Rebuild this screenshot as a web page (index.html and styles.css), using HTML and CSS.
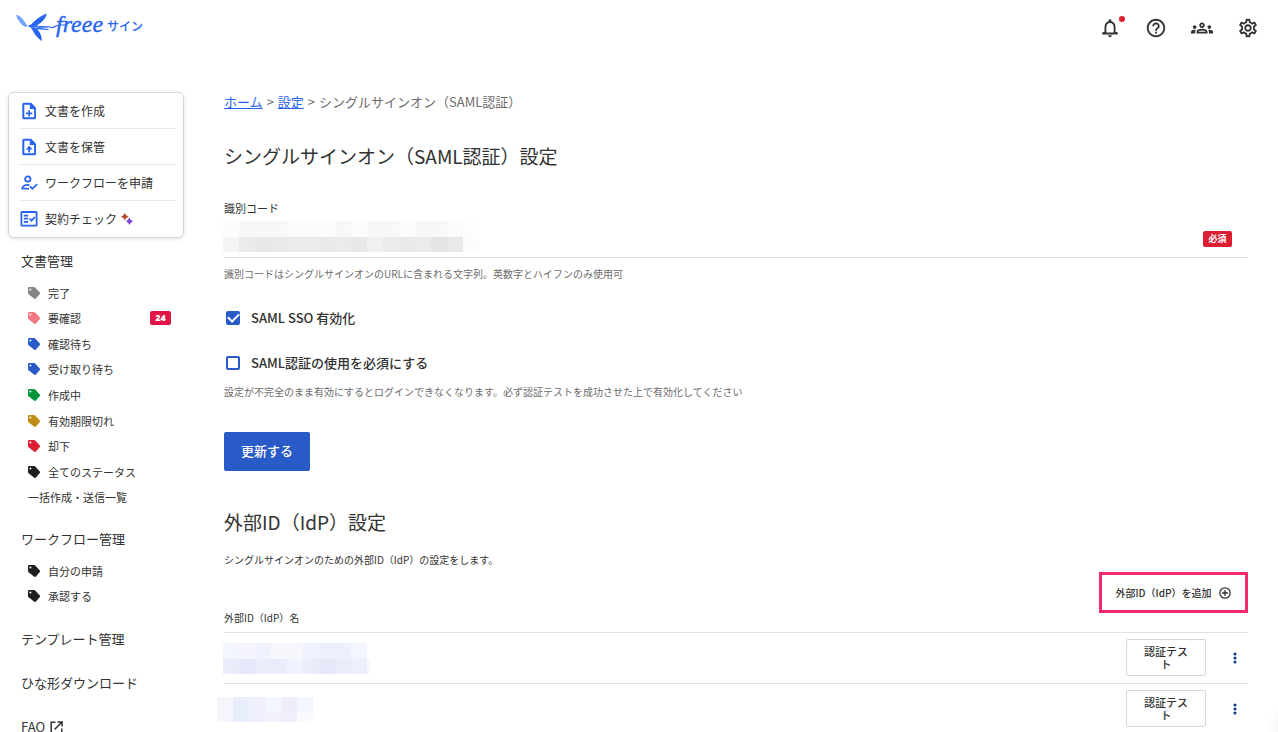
FILE: index.html
```html
<!DOCTYPE html>
<html lang="ja">
<head>
<meta charset="utf-8">
<title>シングルサインオン（SAML認証）設定</title>
<link rel="stylesheet" href="styles.css">
</head>
<body>
<svg class="defs" aria-hidden="true">
  <symbol id="tag" viewBox="0 0 12 12"><path fill-rule="evenodd" d="M0 1.200Q0 0 1.200 0H6Q6.700 0 7.200.5L11.800 5.400Q12.400 6.200 11.800 7L7.900 11.600Q7.100 12.300 6.300 11.700L.6 7.200Q0 6.700 0 6ZM2.400 1.400A1 1 0 1 0 2.400 3.400A1 1 0 0 0 2.400 1.400Z"/></symbol>
  <symbol id="kebab" viewBox="0 0 4 12"><circle cx="2" cy="2" r="1.600"/><circle cx="2" cy="6" r="1.600"/><circle cx="2" cy="10" r="1.600"/></symbol>
</svg>

<header class="header">
  <a class="logo" href="#" aria-label="freee サイン">
    <svg width="136" height="40" viewBox="8 8 136 40">
      <path class="logo-light" d="M16.300 15.200C18.200 14.500 21 17 23.200 19.800C25 22.200 26.300 24.200 27.300 25.300L26.200 27.200C24.500 26.800 22.500 25.500 20.500 23C18.500 20.500 16.600 17.800 16.300 15.200Z"/>
      <path class="logo-blue" d="M46.800 13.500C40 16 34.500 20.500 31.300 24.400C29.800 24.600 28.800 25.300 27.500 26C29.500 26.600 31 27.400 31.700 28.700C33.500 33 37.500 38 41.800 41.200C42 36.500 40.200 32 37.300 29.200L48.500 29.900V29L38.500 27.800L50.800 27.400L51 26.600L36.500 25.700C41.500 22.800 45.800 19 46.800 13.500Z"/>
      <path class="logo-light" d="M31.500 27L41 26.600L36 28.400Z"/>
      <path class="logo-line" d="M50.500 27.600C53.500 28.200 56 25.400 59 25H66"/>
      <text class="logo-name" x="56" y="32">freee</text>
      <text class="logo-product" x="107" y="31">サイン</text>
    </svg>
  </a>
  <nav class="header-tools" aria-label="ユーザーメニュー">
    <button class="icon-button" type="button" aria-label="通知">
      <svg width="22" height="22" viewBox="0 0 24 24"><path d="M12 22c1.100 0 2-.9 2-2h-4c0 1.100.9 2 2 2zm6-6v-5c0-3.070-1.630-5.640-4.500-6.320V4c0-.83-.67-1.500-1.500-1.500s-1.500.67-1.500 1.500v.68C7.640 5.360 6 7.920 6 11v5l-2.500 1v2h17v-2zm-2 1H8v-6c0-2.480 1.510-4.500 4-4.500s4 2.020 4 4.500z"/></svg>
      <span class="dot"></span>
    </button>
    <button class="icon-button" type="button" aria-label="ヘルプ">
      <svg width="22" height="22" viewBox="0 0 24 24"><path d="M11 18h2v-2h-2v2zm1-16C6.480 2 2 6.480 2 12s4.480 10 10 10 10-4.480 10-10S17.520 2 12 2zm0 18c-4.410 0-8-3.590-8-8s3.590-8 8-8 8 3.590 8 8-3.590 8-8 8zm0-14c-2.210 0-4 1.790-4 4h2c0-1.100.9-2 2-2s2 .9 2 2c0 2-3 1.750-3 5h2c0-2.250 3-2.500 3-5 0-2.210-1.790-4-4-4z"/></svg>
    </button>
    <button class="icon-button" type="button" aria-label="メンバー">
      <svg width="22" height="22" viewBox="0 0 24 24"><path d="M4 13c1.100 0 2-.9 2-2s-.9-2-2-2-2 .9-2 2 .9 2 2 2zm1.130 1.100C4.760 14.040 4.390 14 4 14c-.99 0-1.930.21-2.780.58C.48 14.900 0 15.620 0 16.430V18h4.500v-1.610c0-.83.23-1.610.63-2.290zM20 13c1.100 0 2-.9 2-2s-.9-2-2-2-2 .9-2 2 .9 2 2 2zm4 3.430c0-.81-.48-1.530-1.220-1.850C21.930 14.210 20.990 14 20 14c-.39 0-.76.04-1.130.1.400.68.630 1.460.630 2.290V18H24v-1.570zM16.240 13.650C15.070 13.130 13.630 12.750 12 12.750s-3.070.39-4.240.9C6.680 14.130 6 15.210 6 16.390V18h12v-1.610c0-1.180-.68-2.260-1.760-2.740zM8.070 16c.09-.23.13-.39.91-.69.97-.38 1.990-.56 3.020-.56s2.050.18 3.020.56c.77.300.81.460.91.690H8.070zM12 8c.55 0 1 .45 1 1s-.45 1-1 1-1-.45-1-1 .45-1 1-1m0-2c-1.660 0-3 1.340-3 3s1.340 3 3 3 3-1.340 3-3-1.340-3-3-3z"/></svg>
    </button>
    <button class="icon-button" type="button" aria-label="設定">
      <svg width="22" height="22" viewBox="0 0 24 24"><path d="M19.430 12.980c.04-.32.07-.64.07-.98 0-.34-.03-.66-.07-.98l2.110-1.650c.19-.15.240-.42.120-.64l-2-3.460c-.09-.16-.26-.25-.44-.25-.06 0-.12.01-.17.03l-2.490 1c-.52-.4-1.080-.73-1.690-.98l-.38-2.650C14.460 2.180 14.250 2 14 2h-4c-.25 0-.46.18-.49.42l-.38 2.650c-.61.25-1.170.59-1.690.98l-2.490-1c-.06-.02-.12-.03-.18-.03-.17 0-.34.09-.43.25l-2 3.460c-.13.22-.07.49.12.64l2.110 1.650c-.04.32-.07.65-.07.98 0 .33.03.66.07.98l-2.110 1.650c-.19.15-.24.42-.12.64l2 3.460c.09.16.26.25.44.25.06 0 .12-.01.17-.03l2.490-1c.52.4 1.080.73 1.690.98l.38 2.650c.03.24.24.42.49.42h4c.25 0 .46-.18.49-.42l.38-2.650c.61-.25 1.170-.59 1.690-.98l2.490 1c.06.02.12.03.18.03.17 0 .34-.09.43-.25l2-3.460c.12-.22.07-.49-.12-.64l-2.110-1.650zm-1.980-1.710c.04.31.05.52.05.73 0 .21-.02.43-.05.73l-.14 1.130.89.7 1.080.84-.7 1.210-1.270-.51-1.040-.42-.9.680c-.43.32-.84.56-1.250.73l-1.060.43-.16 1.130-.2 1.350h-1.400l-.19-1.350-.16-1.130-1.060-.43c-.43-.18-.83-.41-1.230-.71l-.91-.7-1.060.43-1.270.51-.7-1.210 1.080-.84.89-.7-.14-1.130c-.03-.31-.05-.54-.05-.74s.02-.43.05-.73l.14-1.130-.89-.7-1.080-.84.7-1.210 1.270.51 1.040.42.9-.68c.43-.32.84-.56 1.250-.73l1.060-.43.16-1.130.2-1.350h1.390l.19 1.350.16 1.130 1.060.43c.43.18.83.41 1.230.71l.91.7 1.060-.43 1.270-.51.7 1.210-1.070.85-.89.7.14 1.130zM12 8c-2.210 0-4 1.790-4 4s1.790 4 4 4 4-1.790 4-4-1.790-4-4-4zm0 6c-1.100 0-2-.9-2-2s.9-2 2-2 2 .9 2 2-.9 2-2 2z"/></svg>
    </button>
  </nav>
</header>

<div class="layout">
  <nav class="sidebar" aria-label="メインメニュー">
    <ul class="actions">
      <li><a href="#"><svg width="18" height="18" viewBox="0 0 18 18"><path fill-rule="evenodd" d="M3.800.8h7.400l4.800 5v10a1.500 1.500 0 0 1-1.500 1.500H3.800a1.500 1.500 0 0 1-1.500-1.500V2.300A1.500 1.500 0 0 1 3.800.8zM4.300 2.700v12.600h9.800V7H9.800V2.700z"/><path d="M8.300 8.200H10v2.300h2.300v1.700H10v2.300H8.300v-2.300H6v-1.700h2.300z"/></svg>文書を作成</a></li>
      <li><a href="#"><svg width="18" height="18" viewBox="0 0 18 18"><path fill-rule="evenodd" d="M3.800.8h7.400l4.800 5v10a1.500 1.500 0 0 1-1.500 1.500H3.800a1.500 1.500 0 0 1-1.500-1.500V2.300A1.500 1.500 0 0 1 3.800.8zM4.300 2.700v12.600h9.800V7H9.800V2.700z"/><path d="M9.200 7.800l3.500 3.700h-2.500v3H8.200v-3H5.700z"/></svg>文書を保管</a></li>
      <li><a href="#"><svg width="18" height="18" viewBox="0 0 18 18"><g class="stroke"><circle cx="7.800" cy="5" r="2.700"/><path d="M9.500 11.200C6 10.200 2.100 11.700 2.100 14.700H9M10 12.400l2.400 2.400 4.700-4.600"/></g></svg>ワークフローを申請</a></li>
      <li><a href="#"><svg width="18" height="18" viewBox="0 0 18 18"><g class="stroke"><rect x="1.400" y="2" width="15.200" height="13.600" rx=".6"/><path d="M3.800 5.600h4.400M3.800 8.700h4.400M3.800 11.800h4.400M9.600 8.700l1.900 1.900 3.400-3.600"/></g></svg>契約チェック<svg class="sparkle" width="12" height="12" viewBox="0 0 12 12"><path fill="#b9472a" d="M3.800 0Q4.600 3 7.600 3.800Q4.600 4.600 3.800 7.600Q3 4.600 0 3.800Q3 3 3.800 0Z"/><path fill="#7540d5" d="M8.400 4.600Q9.200 7.400 12 8.300Q9.200 9.200 8.400 12Q7.600 9.200 4.800 8.300Q7.600 7.400 8.400 4.600Z"/></svg></a></li>
    </ul>

    <h2 class="group-title">文書管理</h2>
    <ul class="statuses statuses-documents">
      <li><a href="#"><svg class="tag tag-gray"><use href="#tag"/></svg>完了</a></li>
      <li><a href="#"><svg class="tag tag-pink"><use href="#tag"/></svg>要確認<span class="count">24</span></a></li>
      <li><a href="#"><svg class="tag tag-blue"><use href="#tag"/></svg>確認待ち</a></li>
      <li><a href="#"><svg class="tag tag-blue"><use href="#tag"/></svg>受け取り待ち</a></li>
      <li><a href="#"><svg class="tag tag-green"><use href="#tag"/></svg>作成中</a></li>
      <li><a href="#"><svg class="tag tag-gold"><use href="#tag"/></svg>有効期限切れ</a></li>
      <li><a href="#"><svg class="tag tag-red"><use href="#tag"/></svg>却下</a></li>
      <li><a href="#"><svg class="tag"><use href="#tag"/></svg>全てのステータス</a></li>
      <li><a href="#">一括作成・送信一覧</a></li>
    </ul>

    <h2 class="group-title">ワークフロー管理</h2>
    <ul class="statuses statuses-workflow">
      <li><a href="#"><svg class="tag"><use href="#tag"/></svg>自分の申請</a></li>
      <li><a href="#"><svg class="tag"><use href="#tag"/></svg>承認する</a></li>
    </ul>

    <ul class="links">
      <li><a href="#">テンプレート管理</a></li>
      <li><a href="#">ひな形ダウンロード</a></li>
      <li><a href="#">FAQ<svg width="13" height="13" viewBox="0 0 13 13"><path d="M5.500 1.200H1.200v10.600h10.600V7.500M7.500.9h4.600v4.600M12 1L4.500 8.500"/></svg></a></li>
    </ul>
  </nav>

  <main class="main">
    <nav class="breadcrumb" aria-label="パンくず"><a href="#">ホーム</a><span>&gt;</span><a href="#">設定</a><span>&gt;</span>シングルサインオン（SAML認証）</nav>
    <h1 class="title">シングルサインオン（SAML認証）設定</h1>

    <form>
      <label class="field-label" for="code">識別コード</label>
      <div class="field">
        <input id="code" type="text">
        <svg class="mosaic mosaic-code" width="256" height="31" shape-rendering="crispEdges" aria-hidden="true">
          <path fill="#fcfcfc" d="M0 0h16v16H0zM64 0h48v16H64zM128 0h16v16h-16zM176 0h16v16h-16zM224 0h16v16h-16zM240 16h16v15h-16z"/>
          <path fill="#f8f8f8" d="M16 0h48v16H16zM112 0h16v16h-16zM144 0h32v16h-32zM192 0h32v16h-32z"/>
          <path fill="#fdfdfd" d="M240 0h16v16h-16z"/>
          <path fill="#f4f4f4" d="M0 16h16v15H0z"/>
          <path fill="#ebebeb" d="M16 16h208v15H16z"/>
          <path fill="#e8e8e6" d="M32 16h16v15H32zM128 16h16v15h-16z"/>
          <path fill="#e7eae8" d="M48 16h16v15H48zM176 16h16v15h-16z"/>
          <path fill="#f0f0f0" d="M144 16h16v15h-16z"/>
          <path fill="#e5e5e5" d="M208 16h16v15h-16z"/>
          <path fill="#e9e9e9" d="M224 16h16v15h-16zM96 16h16v15H96z"/>
        </svg>
        <span class="required">必須</span>
      </div>
      <p class="help">識別コードはシングルサインオンのURLに含まれる文字列。英数字とハイフンのみ使用可</p>
      <label class="check check-first"><input type="checkbox" checked>SAML SSO 有効化</label>
      <label class="check"><input type="checkbox">SAML認証の使用を必須にする</label>
      <p class="help help-check">設定が不完全のまま有効にするとログインできなくなります。必ず認証テストを成功させた上で有効化してください</p>
      <button class="submit" type="button">更新する</button>
    </form>

    <h2 class="title title-idp">外部ID（IdP）設定</h2>
    <p class="lead">シングルサインオンのための外部ID（IdP）の設定をします。</p>
    <button class="add" type="button">外部ID（IdP）を追加<svg width="12" height="12" viewBox="0 0 12 12"><circle cx="6" cy="6" r="5.200"/><path d="M6 3v6M3 6h6"/></svg></button>

    <table class="idps">
      <thead><tr><th scope="col">外部ID（IdP）名</th><th class="cell-test"></th><th class="cell-menu"></th></tr></thead>
      <tbody>
        <tr>
          <td>
            <svg class="mosaic mosaic-first" width="147" height="31" shape-rendering="crispEdges" role="img" aria-label="外部ID 1">
              <path fill="#f3f6fe" d="M0 0h16v16H0zM128 0h16v16h-16z"/>
              <path fill="#f4f4fd" d="M16 0h16v16H16z"/>
              <path fill="#f0f3fd" d="M32 0h16v16H32zM80 0h16v16H80zM64 16h16v15H64z"/>
              <path fill="#f7f8fe" d="M48 0h32v16H48zM144 16h3v15h-3z"/>
              <path fill="#edf0fc" d="M96 0h32v16H96zM128 16h16v15h-16z"/>
              <path fill="#e8ecfb" d="M0 16h16v15H0zM32 16h32v15H32zM80 16h16v15H80zM112 16h16v15h-16z"/>
              <path fill="#e6e8fa" d="M16 16h16v15H16zM96 16h16v15H96z"/>
            </svg>
          </td>
          <td class="cell-test"><button class="test" type="button">認証テスト</button></td>
          <td class="cell-menu"><button class="menu" type="button" aria-label="メニュー"><svg width="4" height="12"><use href="#kebab"/></svg></button></td>
        </tr>
        <tr>
          <td>
            <svg class="mosaic mosaic-second" width="96" height="25" shape-rendering="crispEdges" role="img" aria-label="外部ID 2">
              <path fill="#f5f5fd" d="M0 0h16v25H0z"/>
              <path fill="#e8edfc" d="M16 0h16v25H16z"/>
              <path fill="#f0f0fc" d="M32 0h16v25H32zM64 16h16v9H64z"/>
              <path fill="#f3f6fe" d="M48 0h16v16H48zM80 0h16v16H80z"/>
              <path fill="#f2f2fb" d="M48 16h16v9H48z"/>
              <path fill="#eeeefa" d="M64 0h16v16H64z"/>
              <path fill="#fafbff" d="M80 16h16v9H80z"/>
            </svg>
          </td>
          <td class="cell-test"><button class="test" type="button">認証テスト</button></td>
          <td class="cell-menu"><button class="menu" type="button" aria-label="メニュー"><svg width="4" height="12"><use href="#kebab"/></svg></button></td>
        </tr>
      </tbody>
    </table>
  </main>
</div>
<div class="chat-shadow"></div>
</body>
</html>
```

FILE: styles.css
```css
* { box-sizing: border-box; }

body {
  display: flex;
  flex-direction: column;
  height: 100vh;
  margin: 0;
  overflow: hidden;
  background: #fff;
  color: #323232;
  font-family: "Noto Sans CJK JP", "Noto Sans", sans-serif;
  font-size: 13px;
  line-height: 20px;
}

h1, h2, p, ul { margin: 0; padding: 0; font-weight: 400; }
ul { list-style: none; }
a { color: inherit; text-decoration: none; }
button, input { font: inherit; color: inherit; }
button { border: 0; padding: 0; background: none; cursor: pointer; }
svg { flex: none; display: block; }
.defs { position: absolute; width: 0; height: 0; }

/* Header */
.header {
  display: flex;
  flex: none;
  align-items: center;
  justify-content: space-between;
  height: 56px;
  padding: 0 19px 0 8px;
}
.logo-blue { fill: #2864f0; }
.logo-light { fill: #73a5ff; }
.logo-line { fill: none; stroke: #2864f0; stroke-width: 1.200; }
.logo-name {
  fill: #2864f0;
  stroke: #2864f0;
  stroke-width: .4;
  font-family: "Liberation Serif", serif;
  font-size: 24px;
  font-style: italic;
}
.logo-product { fill: #2864f0; font-size: 12px; font-weight: 500; }
.header-tools { display: flex; gap: 24px; }
.icon-button { position: relative; width: 22px; height: 22px; fill: #323232; }
.dot {
  position: absolute;
  top: -1px;
  right: -4px;
  width: 6px;
  height: 6px;
  border-radius: 50%;
  background: #dc1e32;
}

.layout { display: flex; flex: 1; align-items: flex-start; min-height: 0; padding: 36px 30px 0 8px; }

/* Sidebar */
.sidebar { flex: none; width: 176px; margin-right: 40px; }
.actions {
  padding: 0 8px 1px 10px;
  border: 1px solid #d7d7db;
  border-radius: 6px;
  box-shadow: 0 1px 4px rgba(0, 0, 0, .12);
  font-size: 12px;
}
.actions li + li { border-top: 1px solid #e9e7e7; }
.actions a { display: flex; align-items: center; height: 35px; gap: 7px; padding-left: 1px; fill: #2864f0; }
.actions .stroke { fill: none; stroke: #2864f0; stroke-width: 1.800; }
.actions .sparkle { margin-left: -3px; }
.group-title { margin: 13px 0 9px 13px; font-size: 13px; }
.statuses { display: grid; grid-auto-rows: 1fr; padding: 0 13px 0 20px; font-size: 11px; }
.statuses-documents { height: 230px; }
.statuses-workflow { height: 51px; }
.statuses + .group-title { margin-top: 19px; }
.statuses a { display: flex; align-items: center; gap: 8px; height: 100%; }
.tag { width: 12px; height: 12px; fill: #1e1e1e; }
.tag-gray { fill: #858585; }
.tag-pink { fill: #f07882; }
.tag-blue { fill: #285ac8; }
.tag-green { fill: #00963c; }
.tag-gold { fill: #be8c14; }
.tag-red { fill: #dc1e32; }
.count {
  width: 21px;
  margin-left: auto;
  border-radius: 2px;
  background: #e01446;
  color: #fff;
  font-family: "Open Sans", sans-serif;
  font-size: 9px;
  font-weight: 800;
  line-height: 14px;
  text-align: center;
}
.links { display: grid; gap: 24px; padding: 20px 0 0 13px; }
.links a { display: flex; align-items: center; gap: 5px; }
.links svg { fill: none; stroke: #323232; stroke-width: 1.500; }

/* Main */
.main { flex: 1; min-width: 0; }
.breadcrumb { color: #6e6b6b; }
.breadcrumb a { color: #2864f0; text-decoration: underline; }
.breadcrumb span { margin: 0 4px; }
.title { margin: 30px 0; font-size: 19px; line-height: 28px; }
.field-label { display: block; font-size: 11px; line-height: 16px; }
.field { position: relative; border-bottom: 1px solid #e1e1e1; }
.field input { display: block; width: 100%; height: 41px; border: 0; background: none; outline: 0; }
.mosaic-code { position: absolute; top: 5px; left: -1px; }
.required {
  position: absolute;
  right: 16px;
  bottom: 10px;
  width: 29px;
  border-radius: 2px;
  background: #dc1e32;
  color: #fff;
  font-size: 9px;
  font-weight: 700;
  line-height: 16px;
  text-align: center;
}
.help { margin-top: 8px; color: #6e6b6b; font-size: 10px; line-height: 16px; }
.help-check { margin-top: 11px; }
.check { display: flex; align-items: center; gap: 11px; width: fit-content; margin-top: 25px; font-weight: 500; }
.check-first { margin-top: 26px; }
.check input {
  appearance: none;
  display: grid;
  place-items: center;
  width: 14px;
  height: 14px;
  margin: 0 0 0 2px;
  border: 2px solid #285ac8;
  border-radius: 2px;
  background: #fff;
}
.check input:checked { background: #285ac8; }
.check input:checked::before {
  content: "";
  width: 9px;
  height: 5px;
  margin-bottom: 3px;
  border: solid #fff;
  border-width: 0 0 2px 2px;
  rotate: -45deg;
}
.submit {
  display: block;
  margin-top: 32px;
  padding: 9px 17px 10px;
  border-radius: 2px;
  background: #285ac8;
  color: #fff;
  font-weight: 500;
}
.title-idp { margin: 37px 0 16px; }
.lead { font-size: 10px; line-height: 16px; }
.add {
  display: flex;
  align-items: center;
  justify-content: center;
  gap: 8px;
  width: 149px;
  height: 41px;
  margin: 4px 0 0 auto;
  border: 3px solid #f5286e;
  font-size: 10px;
  font-weight: 500;
}
.add svg { fill: none; stroke: #323232; stroke-width: 1.300; }

.idps { width: 100%; border-collapse: separate; border-spacing: 0; table-layout: fixed; }
.idps th { height: 20px; padding: 0 0 9px; font-size: 10px; font-weight: 400; line-height: 10px; text-align: left; }
.idps td { height: 51px; padding: 0; vertical-align: middle; }
.idps th, .idps td { border-bottom: 1px solid #e1e1e1; }
.idps .cell-test, .idps .cell-menu { width: 32px; padding-bottom: 1px; }
.idps .cell-test { width: 94px; }
.mosaic-first { margin-left: -1px; }
.mosaic-second { margin-left: -7px; }
.test {
  display: block;
  width: 80px;
  height: 37px;
  margin: 0 10px 0 auto;
  padding: 0 16px;
  border: 1px solid #d7d7d7;
  border-radius: 2px;
  font-size: 11px;
  font-weight: 500;
  line-height: 13px;
}
.menu { display: flex; justify-content: center; width: 12px; margin-left: 13px; fill: #143c8c; }

/* Edge of the off-screen chat launcher */
.chat-shadow {
  position: fixed;
  right: -60px;
  bottom: -30px;
  width: 56px;
  height: 56px;
  border-radius: 50%;
  box-shadow: 0 0 20px rgba(0, 0, 0, .12);
}
```
